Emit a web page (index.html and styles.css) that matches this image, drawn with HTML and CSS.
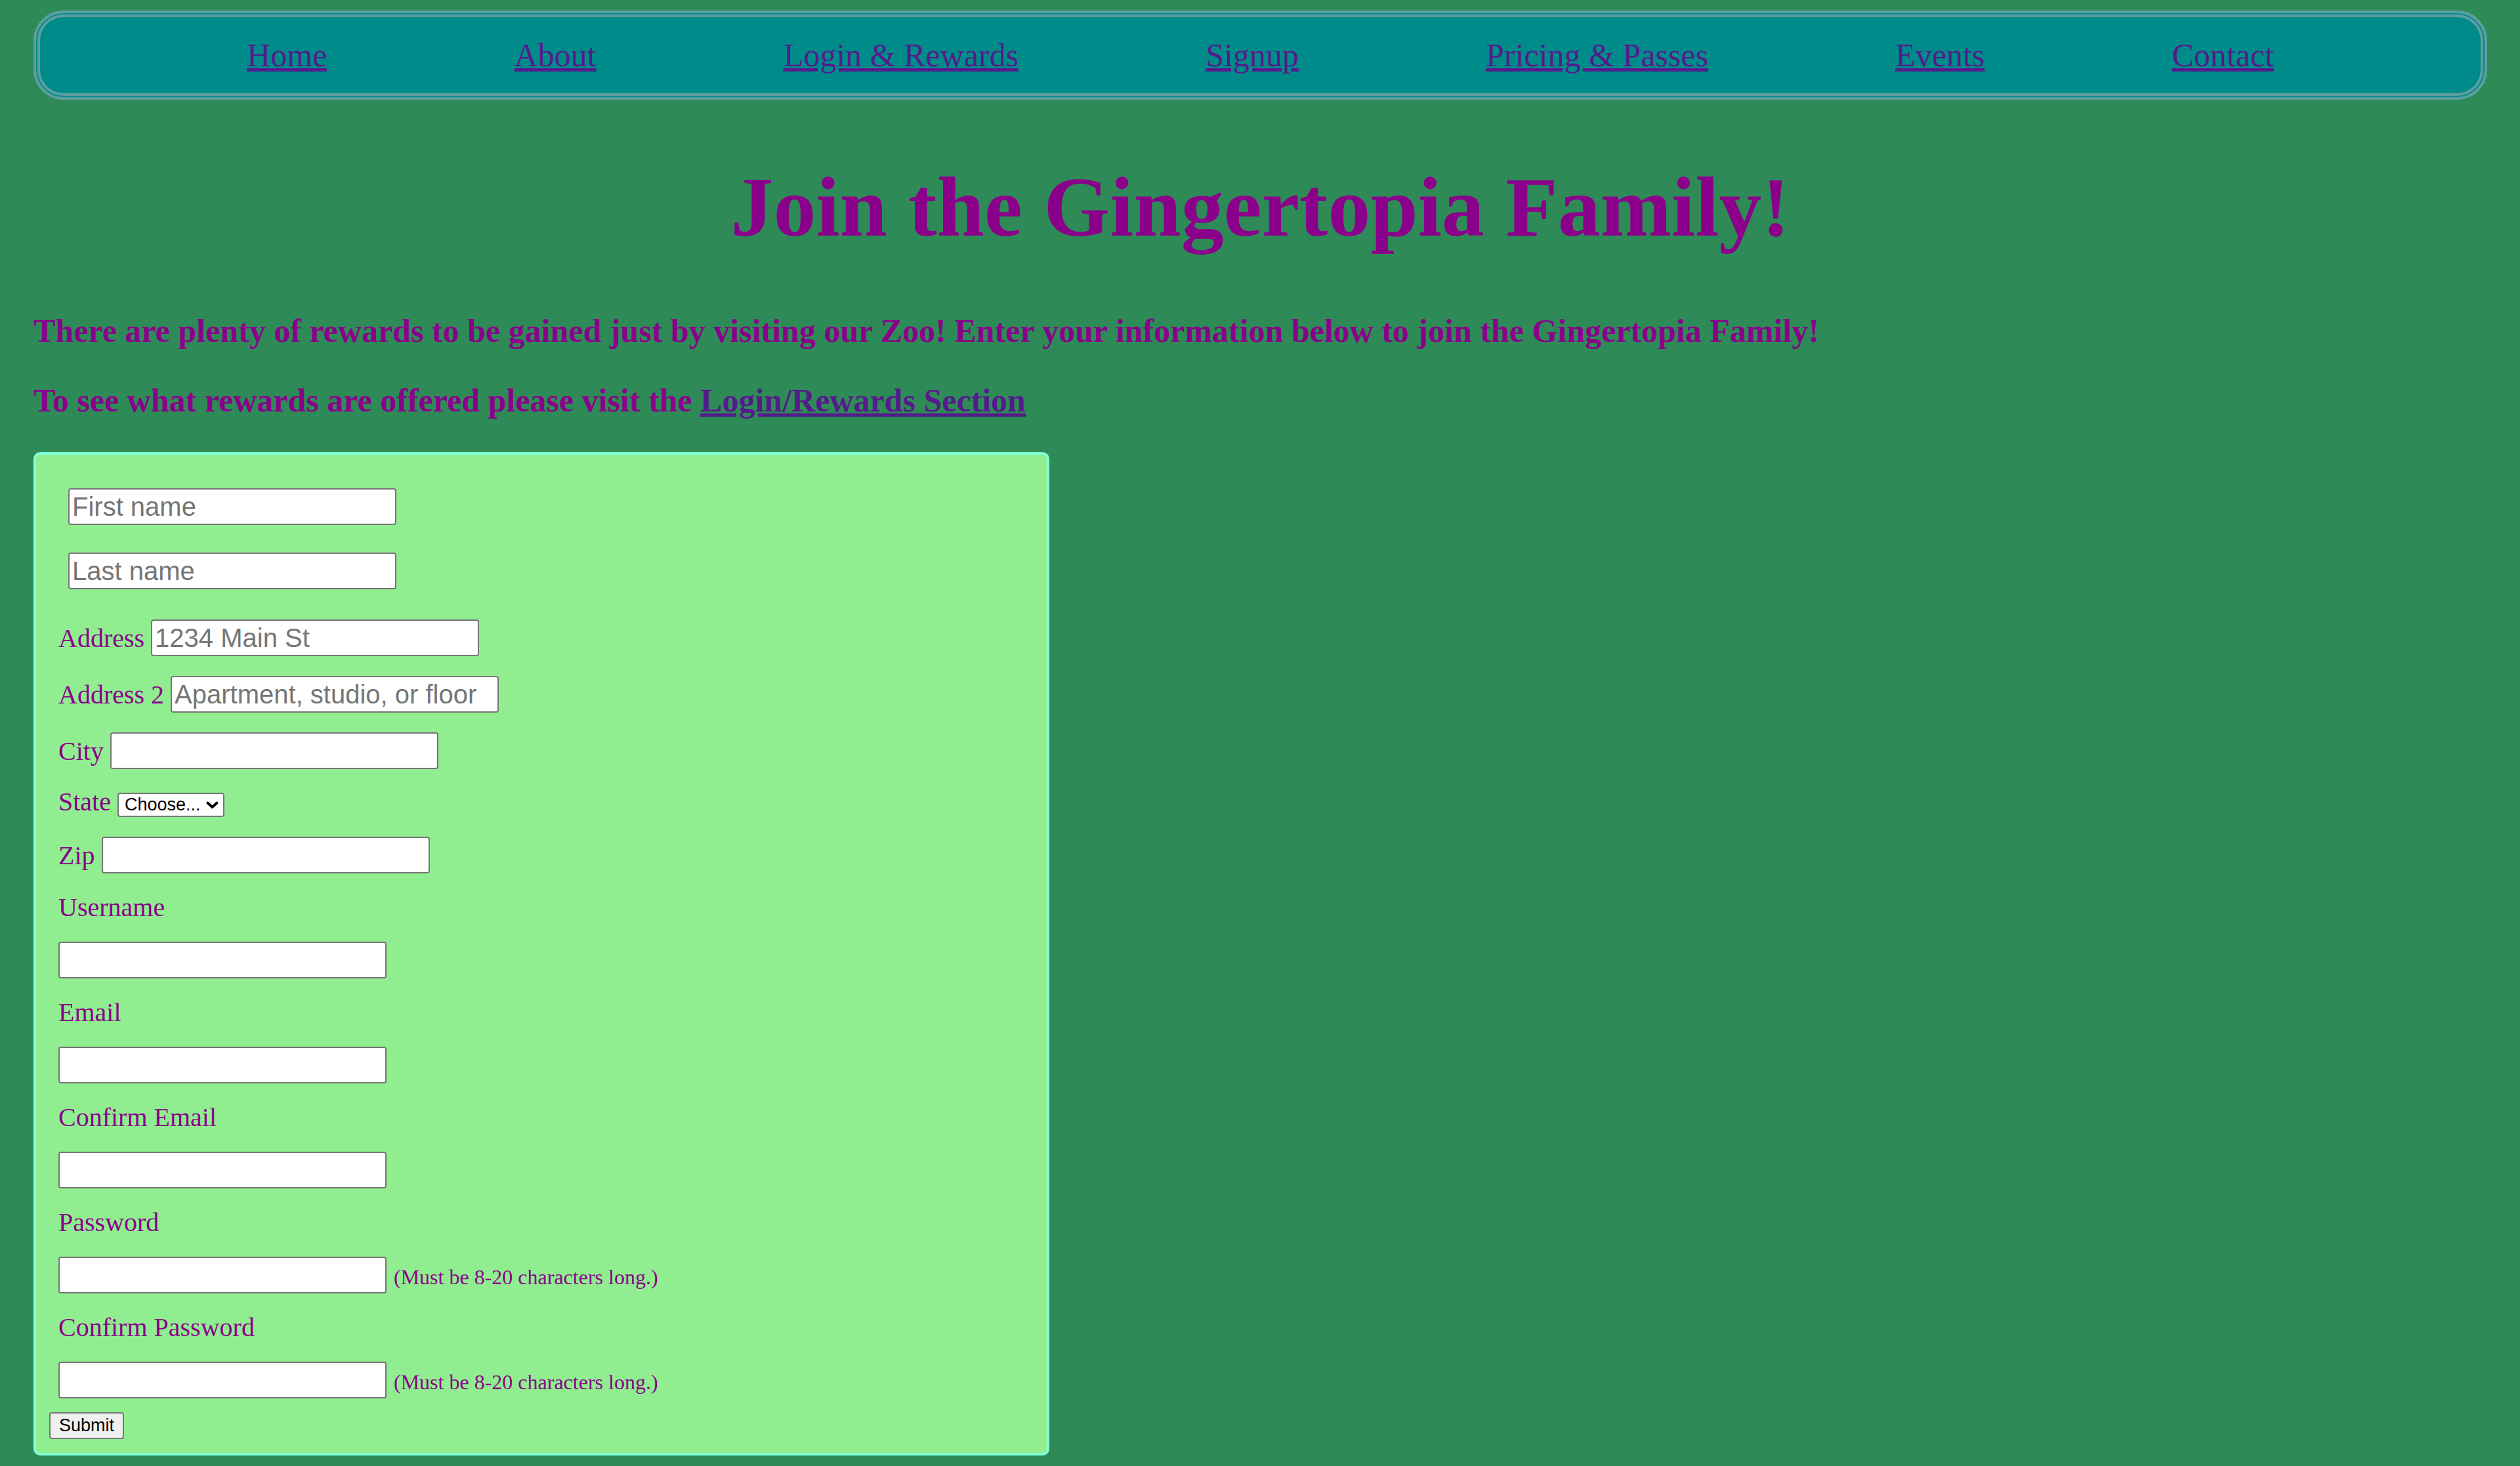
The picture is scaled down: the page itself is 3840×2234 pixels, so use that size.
FILE: index.html
```html
<!DOCTYPE html>
<html lang="en">
<head>
<meta charset="utf-8">
<title>Signup - Gingertopia Zoo</title>
<link rel="stylesheet" href="styles.css">
</head>
<body>
<nav class="topnav">
  <ul class="nav-list">
    <li><a href="#">Home</a></li>
    <li><a href="#">About</a></li>
    <li><a href="#">Login &amp; Rewards</a></li>
    <li><a href="#">Signup</a></li>
    <li><a href="#">Pricing &amp; Passes</a></li>
    <li><a href="#">Events</a></li>
    <li><a href="#">Contact</a></li>
  </ul>
</nav>

<h1 class="title">Join the Gingertopia Family!</h1>
<p class="intro">There are plenty of rewards to be gained just by visiting our Zoo! Enter your information below to join the Gingertopia Family!</p>
<p class="intro intro-second">To see what rewards are offered please visit the <a href="#">Login/Rewards Section</a></p>

<form class="signup">
  <div class="name-row"><input type="text" placeholder="First name"></div>
  <div class="name-row name-last"><input type="text" placeholder="Last name"></div>

  <div class="field-row row-address"><label>Address</label><input type="text" placeholder="1234 Main St"></div>
  <div class="field-row row-gap"><label>Address 2</label><input type="text" placeholder="Apartment, studio, or floor"></div>
  <div class="field-row row-gap"><label>City</label><input type="text"></div>
  <div class="field-row row-state"><label>State</label>
    <span class="select-wrap">
      <select class="state-select">
        <option>Choose...</option>
        <option>...</option>
      </select>
      <svg class="select-arrow" width="19" height="12" viewBox="0 0 19 12" aria-hidden="true">
        <polyline points="2.5,2.5 9.5,9 16.5,2.5" fill="none" stroke="#000" stroke-width="4" stroke-linecap="round" stroke-linejoin="round"/>
      </svg>
    </span>
  </div>
  <div class="field-row row-gap"><label>Zip</label><input type="text"></div>

  <label class="block-label">Username</label>
  <div class="field-row input-row"><input type="text"></div>
  <label class="block-label">Email</label>
  <div class="field-row input-row"><input type="email"></div>
  <label class="block-label">Confirm Email</label>
  <div class="field-row input-row"><input type="email"></div>
  <label class="block-label">Password</label>
  <div class="field-row input-row"><input type="password"><span class="hint">(Must be 8-20 characters long.)</span></div>
  <label class="block-label">Confirm Password</label>
  <div class="field-row input-row"><input type="password"><span class="hint">(Must be 8-20 characters long.)</span></div>

  <div class="submit-row"><button type="submit" class="submit-btn">Submit</button></div>
</form>
</body>
</html>
```

FILE: styles.css
```css
html {
  background: #2e8b57;
}

body {
  margin: 0;
  padding: 16px 50px 16px 51px;
  background: #2e8b57;
  font-family: "Liberation Serif", "Times New Roman", serif;
  color: #8b008b;
}

a {
  color: #551a8b;
}

/* ---------- navigation ---------- */
.topnav {
  box-sizing: border-box;
  height: 136px;
  background: #008b8b;
  border: 4px solid #5f9ea0;
  border-radius: 46px;
  box-shadow: inset 0 0 0 2px #008b8b, inset 0 0 0 6px #5f9ea0;
  display: flex;
  align-items: center;
  justify-content: center;
}

.nav-list {
  list-style: none;
  margin: 0;
  padding: 0;
  display: flex;
  justify-content: center;
  align-items: center;
  gap: 285.2px;
  font-size: 50px;
}

/* ---------- heading & intro ---------- */
.title {
  margin: 88px 0 0;
  font-size: 130px;
  font-weight: bold;
  text-align: center;
  color: #8b008b;
}

.intro {
  margin: 85px 0 0;
  font-size: 50px;
  font-weight: bold;
  color: #8b008b;
}

.intro-second {
  margin-top: 48px;
  margin-bottom: 50px;
}

/* ---------- form ---------- */
.signup {
  box-sizing: border-box;
  width: 1548px;
  background: #90ee90;
  border: 4px solid #7fffd4;
  border-radius: 10px;
  padding: 51px 20px 21px 20px;
  display: flex;
  flex-direction: column;
  align-items: flex-start;
  font-size: 40px;
  line-height: 46px;
}

.signup input {
  box-sizing: border-box;
  width: 500px;
  height: 56px;
  margin: 0;
  padding: 2px 4px;
  border: 2px solid #767676;
  border-radius: 4px;
  background: #fff;
  font-family: "Liberation Sans", Arial, sans-serif;
  font-size: 40px;
  color: #000;
}

.signup input::placeholder {
  color: #757575;
}

.name-row {
  margin-left: 29px;
  display: flex;
}

.name-last {
  margin-top: 42px;
}

.field-row {
  margin-left: 14px;
  display: flex;
  align-items: baseline;
  gap: 10px;
}

.row-address {
  margin-top: 46px;
}

.row-gap {
  margin-top: 30px;
}

.row-state {
  margin-top: 27px;
}

.select-wrap {
  position: relative;
  display: inline-flex;
}

.state-select {
  -webkit-appearance: none;
  appearance: none;
  box-sizing: border-box;
  width: 163px;
  height: 37px;
  margin: 0;
  padding: 0 30px 0 9px;
  border: 2px solid #767676;
  border-radius: 4px;
  background: #fff;
  color: #000;
  font-family: "Liberation Sans", Arial, sans-serif;
  font-size: 27px;
}

.select-arrow {
  position: absolute;
  right: 9px;
  top: 13px;
  pointer-events: none;
}

.block-label {
  display: block;
  margin: 28.5px 0 0 14px;
}

.input-row {
  margin-top: 29.5px;
}

.hint {
  font-size: 32px;
  line-height: 36px;
  margin-left: 1px;
}

.submit-row {
  margin-top: 21px;
  display: flex;
}

.submit-btn {
  box-sizing: border-box;
  width: 114px;
  height: 41px;
  margin: 0;
  padding: 0;
  border: 2px solid #767676;
  border-radius: 4px;
  background: #efefef;
  color: #000;
  font-family: "Liberation Sans", Arial, sans-serif;
  font-size: 27px;
}
```
